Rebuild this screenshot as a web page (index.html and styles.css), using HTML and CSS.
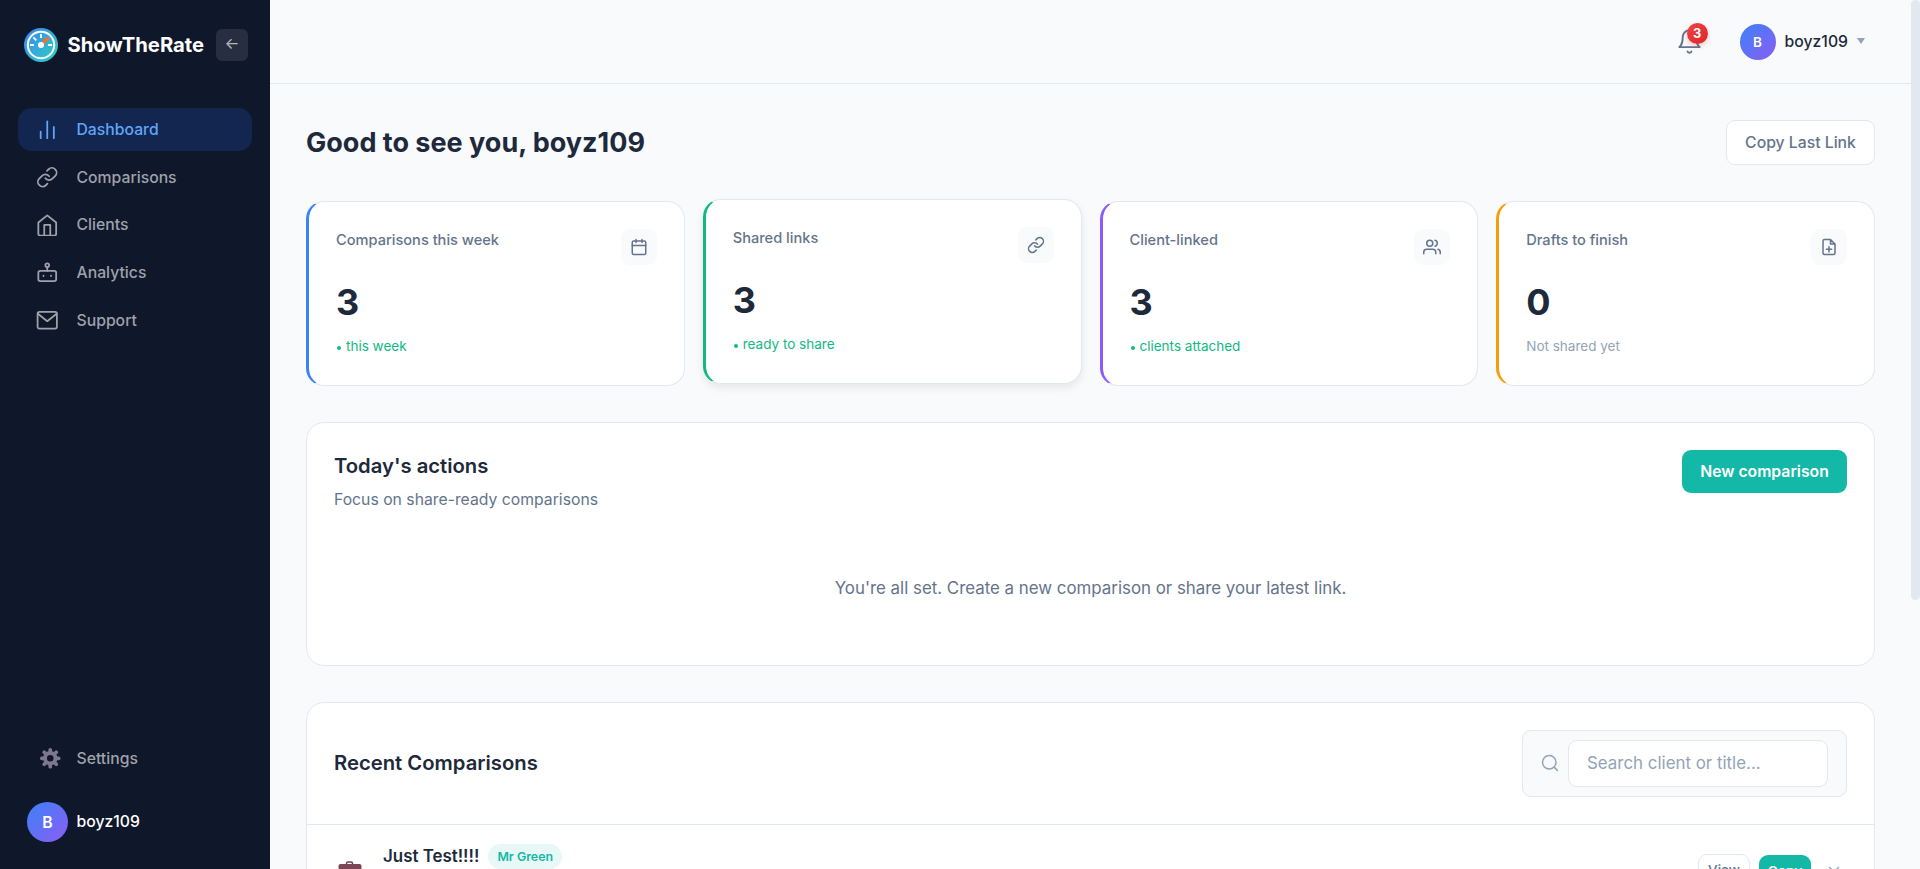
FILE: index.html
```html
<!DOCTYPE html>
<html lang="en">
<head>
  <meta charset="UTF-8">
  <title>ShowTheRate - Dashboard</title>
  <link rel="stylesheet" href="styles.css">
</head>
<body>
  <!-- Sidebar -->
  <aside class="sidebar">
    <div class="brand">
      <svg class="brand-logo" viewBox="0 0 34 34">
        <defs>
          <linearGradient id="logoGradient" x1="0" y1="0" x2="1" y2="1">
            <stop offset="0" stop-color="#3b82f6"/>
            <stop offset="1" stop-color="#2dd4bf"/>
          </linearGradient>
        </defs>
        <circle cx="17" cy="17" r="17" fill="url(#logoGradient)"/>
        <circle cx="17" cy="17" r="13.2" fill="none" stroke="#fff" stroke-width="2"/>
        <path d="M17 6v4M6 17h4M24 17h4M9.3 9.3l3 3" stroke="#fff" stroke-width="1.8"/>
        <path d="M17 17l7.4-7.4" stroke="#f97316" stroke-width="3.2"/>
        <circle cx="17" cy="17" r="3" fill="#fff"/>
      </svg>
      <span class="brand-name">ShowTheRate</span>
      <button class="collapse">←</button>
    </div>

    <nav class="nav">
      <a class="nav-item active">
        <svg viewBox="0 0 24 24"><path d="M5 21.500v-7M12 21.500v-18M19 21.500V9.500"/></svg>
        <span>Dashboard</span>
      </a>
      <a class="nav-item">
        <svg viewBox="0 0 24 24"><path d="M10 13a5 5 0 0 0 7.54.54l3-3a5 5 0 0 0-7.07-7.07l-1.72 1.71M14 11a5 5 0 0 0-7.54-.54l-3 3a5 5 0 0 0 7.07 7.07l1.71-1.71"/></svg>
        <span>Comparisons</span>
      </a>
      <a class="nav-item">
        <svg viewBox="0 0 24 24"><path d="M2.500 9L12 1.500l9.500 7.500v12a2 2 0 0 1-2 2h-15a2 2 0 0 1-2-2zM8.800 23V11.500h6.400V23"/></svg>
        <span>Clients</span>
      </a>
      <a class="nav-item">
        <svg viewBox="0 0 24 24"><rect x="2.500" y="10.500" width="19" height="11" rx="2"/><circle cx="12" cy="4.500" r="2"/><path d="M12 6.500v4M8 15.700v.4M16 15.700v.4"/></svg>
        <span>Analytics</span>
      </a>
      <a class="nav-item">
        <svg viewBox="0 0 24 24"><rect x="1.700" y="3" width="20.600" height="18" rx="2"/><path d="M22 5L12 13 2 5"/></svg>
        <span>Support</span>
      </a>
    </nav>

    <div class="sidebar-bottom">
      <a class="nav-item settings">
        <svg class="gear" viewBox="0 0 24 24">
          <circle cx="12" cy="12" r="5.600" stroke-width="4.200"/>
          <path d="M12 4.500V3M12 21v-1.500M4.500 12H3M21 12h-1.500M6.700 6.700L5.600 5.600M18.400 18.400l-1.100-1.100M6.700 17.300l-1.100 1.100M18.400 5.600l-1.100 1.100" stroke-width="4"/>
        </svg>
        <span>Settings</span>
      </a>
      <div class="profile">
        <span class="avatar">B</span>
        <span class="profile-name">boyz109</span>
      </div>
    </div>
  </aside>

  <div class="main">
    <!-- Top bar -->
    <header class="topbar">
      <div class="bell">
        <svg viewBox="0 0 24 24"><path d="M18 8A6 6 0 0 0 6 8c0 7-3 9-3 9h18s-3-2-3-9M13.730 21a2 2 0 0 1-3.460 0"/></svg>
        <span class="badge">3</span>
      </div>
      <div class="user">
        <span class="avatar small">B</span>
        <span class="user-name">boyz109</span>
        <span class="caret"></span>
      </div>
    </header>

    <main class="content">
      <div class="page-head">
        <h1>Good to see you, boyz109</h1>
        <button class="btn-outline">Copy Last Link</button>
      </div>

      <!-- Stats -->
      <section class="stats">
        <div class="stat blue">
          <div class="stat-top">
            <span class="stat-label">Comparisons this week</span>
            <span class="stat-icon">
              <svg viewBox="0 0 24 24"><rect x="3" y="4" width="18" height="18" rx="2"/><path d="M16 2v4M8 2v4M3 10h18"/></svg>
            </span>
          </div>
          <div class="stat-value">3</div>
          <div class="stat-note"><i></i>this week</div>
        </div>
        <div class="stat green raised">
          <div class="stat-top">
            <span class="stat-label">Shared links</span>
            <span class="stat-icon">
              <svg viewBox="0 0 24 24"><path d="M10 13a5 5 0 0 0 7.54.54l3-3a5 5 0 0 0-7.07-7.07l-1.72 1.71M14 11a5 5 0 0 0-7.54-.54l-3 3a5 5 0 0 0 7.07 7.07l1.71-1.71"/></svg>
            </span>
          </div>
          <div class="stat-value">3</div>
          <div class="stat-note"><i></i>ready to share</div>
        </div>
        <div class="stat purple">
          <div class="stat-top">
            <span class="stat-label">Client-linked</span>
            <span class="stat-icon">
              <svg viewBox="0 0 24 24"><path d="M17 21v-2a4 4 0 0 0-4-4H5a4 4 0 0 0-4 4v2M23 21v-2a4 4 0 0 0-3-3.870M16 3.130a4 4 0 0 1 0 7.750"/><circle cx="9" cy="7" r="4"/></svg>
            </span>
          </div>
          <div class="stat-value">3</div>
          <div class="stat-note"><i></i>clients attached</div>
        </div>
        <div class="stat orange">
          <div class="stat-top">
            <span class="stat-label">Drafts to finish</span>
            <span class="stat-icon">
              <svg viewBox="0 0 24 24"><path d="M14 2H6a2 2 0 0 0-2 2v16a2 2 0 0 0 2 2h12a2 2 0 0 0 2-2V8zM14 2v6h6M12 11.500v7M8.500 15h7"/></svg>
            </span>
          </div>
          <div class="stat-value">0</div>
          <div class="stat-note muted">Not shared yet</div>
        </div>
      </section>

      <!-- Today's actions -->
      <section class="panel actions">
        <div class="panel-head">
          <div>
            <h2>Today's actions</h2>
            <p>Focus on share-ready comparisons</p>
          </div>
          <button class="btn-primary">New comparison</button>
        </div>
        <div class="empty">You're all set. Create a new comparison or share your latest link.</div>
      </section>

      <!-- Recent comparisons -->
      <section class="panel recent">
        <div class="recent-head">
          <h2>Recent Comparisons</h2>
          <div class="search">
            <svg viewBox="0 0 24 24"><circle cx="11" cy="11" r="9"/><path d="M22 22l-4.500-4.500"/></svg>
            <input type="text" placeholder="Search client or title...">
          </div>
        </div>
        <div class="row">
          <svg class="briefcase" viewBox="0 0 24 22">
            <path d="M8.500 4V2.500a1.500 1.500 0 0 1 1.500-1.500h3a1.500 1.500 0 0 1 1.500 1.500V4" fill="none" stroke="#6b4550" stroke-width="1.500"/>
            <rect x="0.500" y="3" width="23" height="18" rx="2" fill="#7b4757"/>
          </svg>
          <span class="row-title">Just Test!!!!</span>
          <span class="pill">Mr Green</span>
          <div class="row-actions">
            <button class="view">View</button>
            <button class="copy">Copy</button>
            <svg class="close" viewBox="0 0 12 12"><path d="M1.500 1.500l9 9M10.500 1.500l-9 9"/></svg>
          </div>
        </div>
      </section>
    </main>
  </div>

  <div class="scrollbar"><div class="thumb"></div></div>
</body>
</html>
```

FILE: styles.css
```css
* {
  box-sizing: border-box;
}

body {
  margin: 0;
  height: 869px;
  display: flex;
  overflow: hidden;
  background: #f8fafc;
  color: #1e293b;
  font-family: Inter, "Liberation Sans", sans-serif;
  font-size: 15.75px;
}

button, input {
  font-family: inherit;
}

h1, h2, p {
  margin: 0;
}

svg {
  fill: none;
  stroke: currentColor;
  stroke-width: 2;
  stroke-linecap: round;
  stroke-linejoin: round;
  flex-shrink: 0;
}

/* Sidebar */
.sidebar {
  width: 270px;
  flex-shrink: 0;
  background: #0f172a;
  display: flex;
  flex-direction: column;
  color: #9fa2aa;
  font-weight: 500;
}

.brand {
  display: flex;
  align-items: center;
  padding: 28px 22px 0 24px;
}

.brand-logo {
  width: 34px;
  height: 34px;
  stroke: none;
  stroke-linecap: butt;
}

.brand-name {
  margin: -1px 0 0 9.5px;
  color: #fff;
  font-size: 20.25px;
  font-weight: 700;
}

.collapse {
  width: 32px;
  height: 32px;
  margin-left: auto;
  padding: 0 0 3px;
  border: none;
  border-radius: 6px;
  background: #272e3f;
  color: #b4b7bd;
  font-size: 15.75px;
}

.nav {
  display: flex;
  flex-direction: column;
  gap: 4.7px;
  padding: 46px 18px 0;
}

.nav-item {
  display: flex;
  align-items: center;
  gap: 18px;
  height: 43px;
  padding-left: 18px;
  border-radius: 13.5px;
}

.nav-item svg {
  width: 22.5px;
  height: 22.5px;
  stroke-width: 1.9;
}

.nav-item.active {
  background: #13264f;
  color: #60a5fa;
}

.sidebar-bottom {
  margin-top: auto;
  padding: 0 18px 27px;
}

.nav-item.settings .gear {
  margin: 0 -3px 0 3px;
  color: #7d788d;
}

.profile {
  display: flex;
  align-items: center;
  gap: 8.5px;
  margin-top: 22px;
  padding-left: 9px;
  color: #fff;
}

.profile-name {
  margin-top: -2px;
}

.avatar {
  width: 41px;
  height: 40px;
  border-radius: 50%;
  display: flex;
  align-items: center;
  justify-content: center;
  background: linear-gradient(135deg, #3b82f6, #8b5cf6);
  color: #fff;
  font-size: 15.75px;
  font-weight: 600;
}

.avatar.small {
  width: 36px;
  height: 36px;
  font-size: 13.5px;
}

/* Top bar */
.main {
  flex: 1;
  min-width: 0;
}

.topbar {
  height: 84px;
  border-bottom: 1px solid #e2e8f0;
  display: flex;
  align-items: center;
  justify-content: flex-end;
  padding: 0 46px 0 0;
}

.bell {
  position: relative;
  color: #64748b;
  height: 27px;
  margin-right: 37px;
}

.bell svg {
  width: 27px;
  height: 27px;
  stroke-width: 1.7;
}

.badge {
  position: absolute;
  top: -5px;
  right: -5px;
  width: 21px;
  height: 21px;
  border-radius: 50%;
  background: linear-gradient(135deg, #ef4444, #dc2626);
  box-shadow: 0 2px 5px rgba(239, 68, 68, 0.3);
  color: #fff;
  font-size: 12.8px;
  font-weight: 700;
  line-height: 21px;
  text-align: center;
}

.user {
  display: flex;
  align-items: center;
  gap: 9px;
  font-weight: 500;
}

.caret {
  margin-top: -1px;
  border: 4px solid transparent;
  border-top: 6px solid #94a3b8;
  border-bottom: none;
}

/* Content */
.content {
  padding: 36px;
}

.page-head {
  display: flex;
  justify-content: space-between;
  align-items: center;
  margin-bottom: 36px;
}

h1 {
  font-size: 27px;
  font-weight: 700;
}

h2 {
  font-size: 20.25px;
  font-weight: 600;
  line-height: 30px;
}

.btn-outline {
  width: 149px;
  height: 45px;
  padding: 0;
  border: 1px solid #e2e8f0;
  border-radius: 9px;
  background: #fff;
  color: #64748b;
  font-size: 15.75px;
  font-weight: 500;
}

.btn-primary {
  width: 165px;
  height: 43px;
  padding: 0;
  border: none;
  border-radius: 9px;
  background: #14b8a6;
  color: #fff;
  font-size: 15.75px;
  font-weight: 600;
}

/* Stats */
.stats {
  display: grid;
  grid-template-columns: repeat(4, 1fr);
  gap: 18px;
  margin-bottom: 36px;
}

.stat {
  height: 185px;
  padding: 27px;
  border: 1px solid #e2e8f0;
  border-left-width: 3px;
  border-radius: 18px;
  background: #fff;
}

.stat.blue { border-left-color: #3b82f6; }
.stat.green { border-left-color: #10b981; }
.stat.purple { border-left-color: #8b5cf6; }
.stat.orange { border-left-color: #f59e0b; }

.stat.raised {
  transform: translateY(-2px);
  box-shadow: 0 4px 8px rgba(0, 0, 0, 0.08);
}

.stat-top {
  display: flex;
  justify-content: space-between;
}

.stat-label {
  color: #64748b;
  font-size: 14.6px;
  font-weight: 500;
  line-height: 22px;
}

.stat-icon {
  width: 36px;
  height: 36px;
  border-radius: 9px;
  background: #f8fafc;
  color: #64748b;
  display: flex;
  align-items: center;
  justify-content: center;
}

.stat-icon svg {
  width: 18px;
  height: 18px;
}

.stat-value {
  margin-top: 17px;
  font-size: 36px;
  font-weight: 700;
  line-height: 40px;
}

.stat-note {
  display: flex;
  align-items: center;
  margin-top: 14px;
  color: #10b981;
  font-size: 13.5px;
  line-height: 20px;
}

.stat-note i {
  width: 4px;
  height: 4px;
  margin: 3px 5px 0 1px;
  border-radius: 50%;
  background: #10b981;
}

.stat-note.muted {
  color: #94a3b8;
}

/* Panels */
.panel {
  border: 1px solid #e2e8f0;
  border-radius: 18px;
  background: #fff;
}

.actions {
  height: 244px;
  padding: 27px;
  margin-bottom: 36px;
}

.panel-head {
  display: flex;
  justify-content: space-between;
  align-items: flex-start;
}

.panel-head h2 {
  padding-top: 1px;
}

.panel-head p {
  margin-top: 7px;
  color: #64748b;
  line-height: 24px;
}

.empty {
  margin-top: 63px;
  color: #64748b;
  font-size: 16.875px;
  line-height: 26px;
  text-align: center;
}

.recent-head {
  display: flex;
  justify-content: space-between;
  align-items: center;
  padding: 27px;
  border-bottom: 1px solid #e2e8f0;
}

.recent-head h2 {
  margin-top: -2px;
}

.search {
  display: flex;
  align-items: center;
  gap: 9px;
  width: 325px;
  height: 67px;
  padding: 0 18px;
  border: 1px solid #e2e8f0;
  border-radius: 9px;
  background: #f8fafc;
  color: #94a3b8;
}

.search svg {
  width: 18px;
  height: 18px;
  margin-top: -1px;
}

.search input {
  width: 260px;
  height: 47px;
  padding: 0 18px 2px;
  border: 1px solid #e2e8f0;
  border-radius: 9px;
  background: #fff;
  font-size: 16.9px;
}

.search input::placeholder {
  color: #94a3b8;
}

.row {
  display: flex;
  align-items: flex-start;
  padding: 19px 27px 27px;
}

.briefcase {
  width: 24px;
  height: 22px;
  margin: 17px 21px 0 4px;
  stroke: none;
}

.row-title {
  font-size: 16.9px;
  font-weight: 600;
  line-height: 25px;
}

.pill {
  height: 25px;
  margin-left: 9px;
  padding: 0 9px;
  border-radius: 13px;
  background: #e8f8f6;
  color: #14b8a6;
  font-size: 12.4px;
  font-weight: 600;
  line-height: 25px;
}

.row-actions {
  display: flex;
  align-items: flex-start;
  margin: 10px 7px 0 auto;
}

.row-actions button {
  width: 52px;
  height: 31px;
  padding: 0;
  border-radius: 9px;
  font-size: 13.5px;
}

.view {
  margin-right: 9px;
  border: 1px solid #e2e8f0;
  background: #fff;
  color: #64748b;
  font-weight: 500;
}

.copy {
  margin: 1px 17px 0 0;
  border: none;
  background: #14b8a6;
  color: #fff;
  font-weight: 600;
}

.close {
  width: 12px;
  height: 12px;
  margin-top: 12px;
  color: #94a3b8;
  stroke-width: 1.5;
}

/* Scrollbar */
.scrollbar {
  width: 9px;
  flex-shrink: 0;
}

.thumb {
  height: 600px;
  border-radius: 4.5px;
  background: #e2e8f0;
}
```
